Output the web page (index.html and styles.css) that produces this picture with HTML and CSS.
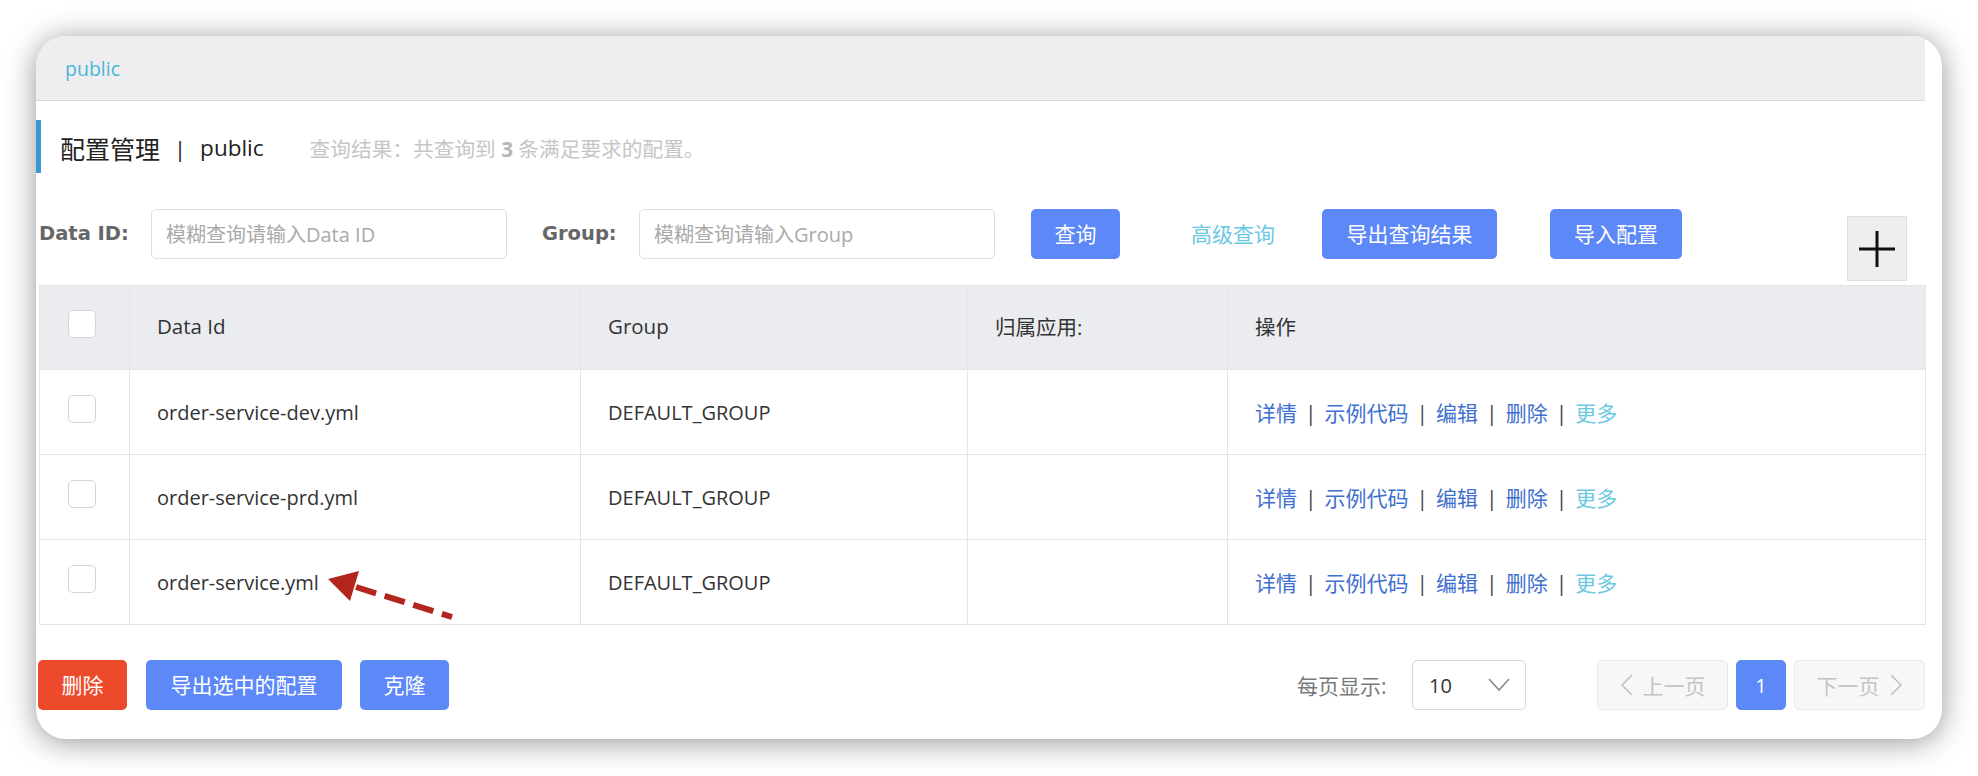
FILE: index.html
```html
<!DOCTYPE html>
<html lang="zh-CN">
<head>
<meta charset="utf-8">
<title>配置管理</title>
<link rel="stylesheet" href="styles.css">
</head>
<body>
<div class="card">
  <div class="main">
    <div class="ns-bar"><span class="ns-name">public</span></div>

    <div class="title-row">
      <span class="title">配置管理</span><span class="title-sep">|</span><span class="title-ns">public</span>
      <span class="summary">查询结果：共查询到 <b>3</b> 条满足要求的配置。</span>
    </div>

    <div class="search-row">
      <label class="field-label l1">Data ID:</label>
      <input class="field-input" type="text" placeholder="模糊查询请输入Data ID">
      <label class="field-label l2">Group:</label>
      <input class="field-input" type="text" placeholder="模糊查询请输入Group">
      <button class="btn btn-primary btn-query">查询</button>
      <a class="adv-link">高级查询</a>
      <button class="btn btn-primary btn-export">导出查询结果</button>
      <button class="btn btn-primary btn-import">导入配置</button>
      <button class="add-btn" aria-label="add">
        <svg width="38" height="38" viewBox="0 0 38 38"><path d="M1 19H37M19 1V37" stroke="#111" stroke-width="3" fill="none"/></svg>
      </button>
    </div>

    <table class="cfg-table">
      <colgroup>
        <col class="c1"><col class="c2"><col class="c3"><col class="c4"><col class="c5">
      </colgroup>
      <thead>
        <tr>
          <th class="cb"><span class="checkbox"></span></th>
          <th>Data Id</th>
          <th>Group</th>
          <th>归属应用:</th>
          <th>操作</th>
        </tr>
      </thead>
      <tbody>
        <tr>
          <td class="cb"><span class="checkbox"></span></td>
          <td class="latin">order-service-dev.yml</td>
          <td class="latin">DEFAULT_GROUP</td>
          <td></td>
          <td class="ops"><a>详情</a><span class="sep">|</span><a>示例代码</a><span class="sep">|</span><a>编辑</a><span class="sep">|</span><a>删除</a><span class="sep">|</span><a class="more">更多</a></td>
        </tr>
        <tr>
          <td class="cb"><span class="checkbox"></span></td>
          <td class="latin">order-service-prd.yml</td>
          <td class="latin">DEFAULT_GROUP</td>
          <td></td>
          <td class="ops"><a>详情</a><span class="sep">|</span><a>示例代码</a><span class="sep">|</span><a>编辑</a><span class="sep">|</span><a>删除</a><span class="sep">|</span><a class="more">更多</a></td>
        </tr>
        <tr>
          <td class="cb"><span class="checkbox"></span></td>
          <td class="latin">order-service.yml</td>
          <td class="latin">DEFAULT_GROUP</td>
          <td></td>
          <td class="ops"><a>详情</a><span class="sep">|</span><a>示例代码</a><span class="sep">|</span><a>编辑</a><span class="sep">|</span><a>删除</a><span class="sep">|</span><a class="more">更多</a></td>
        </tr>
      </tbody>
    </table>

    <div class="footer">
      <div class="bulk">
        <button class="btn btn-danger">删除</button>
        <button class="btn btn-primary btn-export-sel">导出选中的配置</button>
        <button class="btn btn-primary btn-clone">克隆</button>
      </div>
      <div class="pager">
        <span class="page-size-label">每页显示:</span>
        <div class="select">
          <span class="select-val">10</span>
          <svg width="22" height="14" viewBox="0 0 22 14"><polyline points="1,1 11,12 21,1" fill="none" stroke="#8a8a8a" stroke-width="1.6"/></svg>
        </div>
        <div class="page-btn prev">
          <svg width="13" height="22" viewBox="0 0 13 22"><polyline points="12,1 2,11 12,21" fill="none" stroke="#c2c2c2" stroke-width="1.6"/></svg>
          <span>上一页</span>
        </div>
        <div class="page-btn page-cur">1</div>
        <div class="page-btn next">
          <span>下一页</span>
          <svg width="13" height="22" viewBox="0 0 13 22"><polyline points="1,1 11,11 1,21" fill="none" stroke="#c2c2c2" stroke-width="1.6"/></svg>
        </div>
      </div>
    </div>
  </div>
  <div class="gutter"></div>
</div>

<svg class="annotation" width="1978" height="776" viewBox="0 0 1978 776">
  <line x1="356" y1="587" x2="452" y2="617" stroke="#b3261e" stroke-width="6" stroke-dasharray="21 9"/>
  <polygon points="328,579 359,571 350,601" fill="#b3261e"/>
</svg>
</body>
</html>
```

FILE: styles.css
```css
* { box-sizing: border-box; }

body {
  margin: 0;
  width: 1978px;
  height: 776px;
  overflow: hidden;
  background: #ffffff;
  font-family: "Open Sans", "Noto Sans CJK SC", sans-serif;
  font-size: 21px;
  color: #333333;
  position: relative;
}

.card {
  margin: 36px 0 0 36px;
  width: 1906px;
  height: 703px;
  border-radius: 30px;
  background: #ffffff;
  box-shadow: 0 3px 30px rgba(0, 0, 0, 0.42);
  overflow: hidden;
  display: flex;
}

.main {
  width: 1889px;
  flex: none;
}

.gutter { flex: 1; }

/* namespace bar */
.ns-bar {
  height: 65px;
  background: #eeeeee;
  border-bottom: 1px solid #d9d9d9;
  display: flex;
  align-items: center;
  padding-left: 29px;
}

.ns-name {
  color: #4bb6da;
  font-size: 19.5px;
}

/* title */
.title-row {
  margin-top: 19px;
  height: 53px;
  border-left: 5px solid #3898d3;
  display: flex;
  align-items: center;
  padding-left: 19px;
  padding-top: 2px;
}

.title {
  font-size: 25px;
  color: #222222;
}

.title-sep {
  font-size: 22px;
  color: #222222;
  margin: 0 14px;
}

.title-ns {
  font-size: 22.5px;
  color: #222222;
}

.summary {
  margin-left: 46px;
  font-size: 20.7px;
  color: #c6c6c6;
}

.summary b { color: #b6b6b6; }

/* search */
.search-row {
  margin-top: 36px;
  padding-left: 3px;
  height: 72px;
  display: flex;
  align-items: flex-start;
}

.field-label {
  flex: none;
  font-family: "DejaVu Sans", sans-serif;
  font-weight: bold;
  font-size: 19.5px;
  color: #666666;
  line-height: 50px;
}

.l1 { width: 112px; }
.l2 { width: 97px; margin-left: 35px; }

.field-input {
  flex: none;
  width: 356px;
  height: 50px;
  border: 1px solid #dcdee3;
  border-radius: 5px;
  padding: 0 14px;
  font-family: "Open Sans", "Noto Sans CJK SC", sans-serif;
  font-size: 20px;
  color: #333333;
  background: #ffffff;
  outline: none;
}

.field-input::placeholder { color: #a9a9a9; }

.btn {
  flex: none;
  height: 50px;
  border: none;
  border-radius: 5px;
  color: #ffffff;
  font-family: "Open Sans", "Noto Sans CJK SC", sans-serif;
  font-size: 21px;
  padding: 0;
  line-height: 50px;
}

.btn-primary { background: #5d88f8; }
.btn-danger { background: #ec4a2b; width: 89px; }

.btn-query { width: 89px; margin-left: 36px; }

.adv-link {
  flex: none;
  width: 86px;
  margin-left: 71px;
  line-height: 50px;
  color: #6cc8e2;
  font-size: 21px;
}

.btn-export { width: 175px; margin-left: 45px; }
.btn-import { width: 132px; margin-left: 53px; }

.add-btn {
  flex: none;
  margin: 7px 18px 0 auto;
  width: 60px;
  height: 65px;
  border: 1px solid #dddddd;
  background: #eeeeee;
  padding: 0;
  display: flex;
  align-items: center;
  justify-content: center;
}

/* table */
.cfg-table {
  margin: 4px 0 0 3px;
  width: 1886px;
  border-collapse: collapse;
  table-layout: fixed;
}

.c1 { width: 90px; }
.c2 { width: 451px; }
.c3 { width: 387px; }
.c4 { width: 260px; }
.c5 { width: 698px; }

.cfg-table th,
.cfg-table td {
  border: 1px solid #e4e5e9;
  text-align: left;
  padding: 0 0 0 27px;
  font-weight: normal;
  vertical-align: middle;
  color: #333333;
}

.cfg-table th {
  background: #ebecf0;
  font-size: 20.5px;
  padding-bottom: 3px;
}

.cfg-table thead tr { height: 84px; }
.cfg-table tbody tr { height: 85px; }

.cfg-table .cb {
  padding-left: 28px;
  padding-bottom: 7px;
}

.checkbox {
  display: block;
  width: 28px;
  height: 28px;
  border: 1px solid #d3d5da;
  border-radius: 5px;
  background: #ffffff;
}

.cfg-table .latin { font-size: 20px; }

.ops a { color: #3f6fcf; }
.ops a.more { color: #6cc8e2; }
.ops .sep { color: #444444; margin: 0 8px; }

/* footer */
.footer {
  margin-top: 35px;
  height: 50px;
  padding-left: 2px;
  display: flex;
  justify-content: space-between;
  align-items: center;
}

.bulk { display: flex; }
.btn-export-sel { width: 196px; margin-left: 19px; }
.btn-clone { width: 89px; margin-left: 18px; }

.pager {
  display: flex;
  align-items: center;
}

.page-size-label {
  width: 98px;
  color: #7a7a7a;
  font-size: 21px;
}

.select {
  margin-left: 17px;
  width: 114px;
  height: 50px;
  border: 1px solid #d5d7dc;
  border-radius: 5px;
  display: flex;
  align-items: center;
  justify-content: space-between;
  padding: 0 15px 0 16px;
}

.select-val {
  font-size: 20px;
  color: #333333;
}

.page-btn {
  height: 50px;
  width: 131px;
  border: 1px solid #e8e9ed;
  border-radius: 5px;
  background: #f6f7f9;
  color: #c4c4c4;
  font-size: 21px;
  display: flex;
  align-items: center;
  justify-content: center;
  gap: 10px;
}

.prev { margin-left: 71px; }

.page-cur {
  width: 50px;
  margin-left: 8px;
  background: #5d88f8;
  border-color: #5d88f8;
  color: #ffffff;
  font-size: 20px;
}

.next { margin-left: 8px; }

/* annotation arrow */
.annotation {
  position: absolute;
  left: 0;
  top: 0;
  pointer-events: none;
}
```
